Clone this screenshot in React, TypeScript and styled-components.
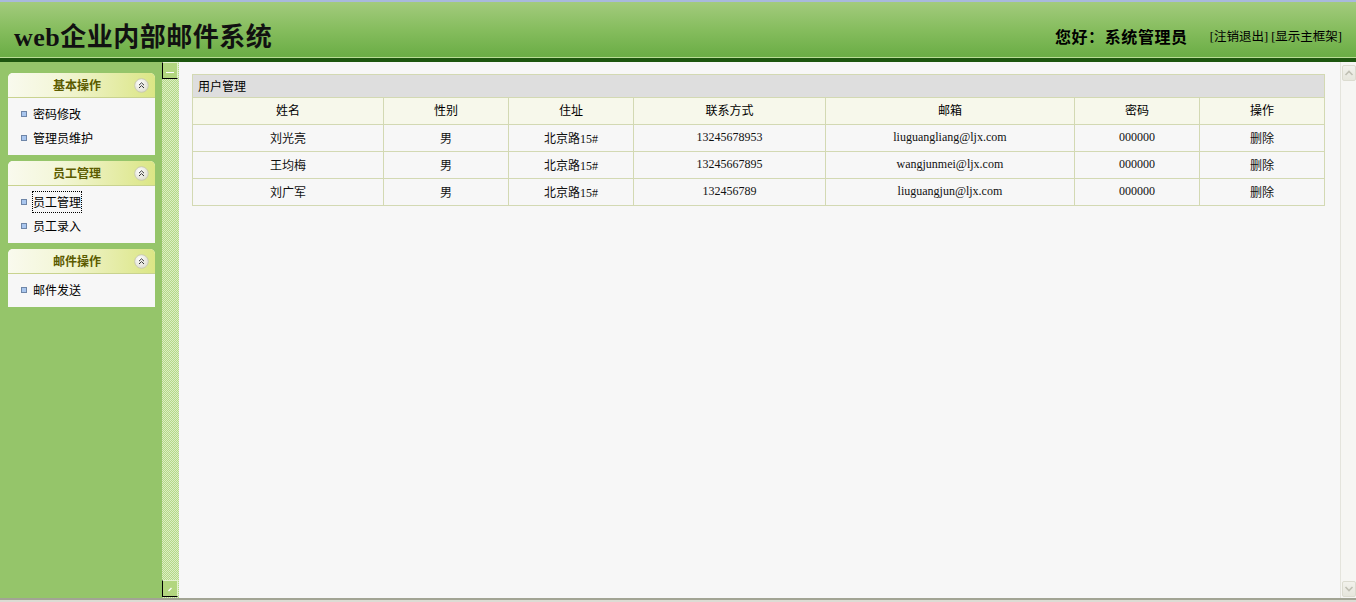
import React from 'react';
import styled, {createGlobalStyle} from 'styled-components';

const FONT = '"Liberation Serif", "Noto Sans CJK SC", serif';

const GlobalStyle = createGlobalStyle`
  html, body {
    margin: 0;
    padding: 0;
    background: #f7f7f7;
  }
  body {
    font-family: ${FONT};
    font-size: 12px;
    color: #000;
  }
`;

type MenuGroup = {title: string; items: string[]};

const menus: MenuGroup[] = [
  {title: '基本操作', items: ['密码修改', '管理员维护']},
  {title: '员工管理', items: ['员工管理', '员工录入']},
  {title: '邮件操作', items: ['邮件发送']},
];

const users = [
  {name: '刘光亮', sex: '男', addr: '北京路15#', phone: '13245678953', mail: 'liuguangliang@ljx.com', pwd: '000000'},
  {name: '王均梅', sex: '男', addr: '北京路15#', phone: '13245667895', mail: 'wangjunmei@ljx.com', pwd: '000000'},
  {name: '刘广军', sex: '男', addr: '北京路15#', phone: '132456789', mail: 'liuguangjun@ljx.com', pwd: '000000'},
];

const columns = [
  {label: '姓名', width: 191},
  {label: '性别', width: 125},
  {label: '住址', width: 125},
  {label: '联系方式', width: 192},
  {label: '邮箱', width: 249},
  {label: '密码', width: 125},
  {label: '操作', width: 125},
];

const CollapseIcon = () => (
  <svg width='15' height='15' viewBox='0 0 15 15'>
    <defs>
      <radialGradient id='cg' cx='0.4' cy='0.35' r='0.7'>
        <stop offset='0' stopColor='#ffffff' />
        <stop offset='1' stopColor='#dcdccc' />
      </radialGradient>
    </defs>
    <circle cx='7.5' cy='7.5' r='6.8' fill='url(#cg)' stroke='#c4c4b0' strokeWidth='0.8' />
    <path d='M5 7.2 L7.5 4.8 L10 7.2 M5 10 L7.5 7.6 L10 10' fill='none' stroke='#333' strokeWidth='1' />
  </svg>
);

export default function App() {
  return (
    <Page>
      <GlobalStyle />
      <Header>
        <Logo>web企业内部邮件系统</Logo>
        <UserArea>
          <Greeting>您好：系统管理员</Greeting>
          <HeaderLinks>[注销退出] [显示主框架]</HeaderLinks>
        </UserArea>
      </Header>
      <HeaderRule />
      <Body>
        <Sidebar>
          {menus.map((group) => (
            <MenuBox key={group.title}>
              <MenuHead>
                <MenuTitle>{group.title}</MenuTitle>
                <CollapseIcon />
              </MenuHead>
              <MenuList>
                {group.items.map((item, i) => (
                  <MenuItem key={item}>
                    <Bullet />
                    <MenuText $focused={group.title === '员工管理' && i === 0}>{item}</MenuText>
                  </MenuItem>
                ))}
              </MenuList>
            </MenuBox>
          ))}
        </Sidebar>
        <Splitter>
          <SplitButton>
            <svg width='14' height='14' viewBox='0 0 14 14'>
              <path d='M3 8.5 H11' stroke='#fff' strokeWidth='1' />
            </svg>
          </SplitButton>
          <SplitButton>
            <svg width='14' height='14' viewBox='0 0 14 14'>
              <path d='M5.5 9 L8.5 6' stroke='#fff' strokeWidth='1.2' />
            </svg>
          </SplitButton>
        </Splitter>
        <Main>
          <Table>
            <colgroup>
              {columns.map((c) => (
                <col key={c.label} style={{width: c.width}} />
              ))}
            </colgroup>
            <tbody>
              <tr>
                <TitleCell colSpan={7}>用户管理</TitleCell>
              </tr>
              <tr>
                {columns.map((c) => (
                  <HeadCell key={c.label}>{c.label}</HeadCell>
                ))}
              </tr>
              {users.map((u) => (
                <tr key={u.name}>
                  <Cell>{u.name}</Cell>
                  <Cell>{u.sex}</Cell>
                  <Cell>{u.addr}</Cell>
                  <Cell>{u.phone}</Cell>
                  <Cell>{u.mail}</Cell>
                  <Cell>{u.pwd}</Cell>
                  <Cell>删除</Cell>
                </tr>
              ))}
            </tbody>
          </Table>
        </Main>
        <ScrollBar>
          <ScrollButton>
            <svg width='10' height='8' viewBox='0 0 10 8'>
              <path d='M1.5 6 L5 2.5 L8.5 6' fill='none' stroke='#c0c0b4' strokeWidth='1.6' />
            </svg>
          </ScrollButton>
          <ScrollButton>
            <svg width='10' height='8' viewBox='0 0 10 8'>
              <path d='M1.5 2 L5 5.5 L8.5 2' fill='none' stroke='#c0c0b4' strokeWidth='1.6' />
            </svg>
          </ScrollButton>
        </ScrollBar>
      </Body>
      <Footer />
    </Page>
  );
}

const Page = styled.div`
  display: flex;
  flex-direction: column;
  height: 602px;
  overflow: hidden;
`;

const Header = styled.div`
  display: flex;
  align-items: center;
  justify-content: space-between;
  height: 55px;
  border-top: 2px solid #a9b9dd;
  background: linear-gradient(#a3cb7d, #86bd5e 50%, #6aad45);
  padding: 0 14px 0 14px;
`;

const Logo = styled.div`
  font-family: ${FONT};
  font-size: 26px;
  font-weight: bold;
  color: #111;
  margin-top: 9px;
  letter-spacing: 0.5px;
`;

const UserArea = styled.div`
  display: flex;
  align-items: center;
  margin-top: 12px;
`;

const Greeting = styled.span`
  font-size: 16px;
  font-weight: bold;
  letter-spacing: 0.6px;
  margin-right: 22px;
`;

const HeaderLinks = styled.span`
  font-size: 12.5px;
`;

const HeaderRule = styled.div`
  height: 4px;
  border-top: 1px solid #b9dc96;
  background: #1d560f;
`;

const Body = styled.div`
  display: flex;
  flex: 1;
  min-height: 0;
`;

const Sidebar = styled.div`
  width: 148px;
  background: #95c56a;
  padding: 11px 6px 0 8px;
  display: flex;
  flex-direction: column;
  gap: 6px;
`;

const MenuBox = styled.div`
  background: #f7f7f7;
  border-radius: 5px 5px 0 0;
  overflow: hidden;
`;

const MenuHead = styled.div`
  display: flex;
  align-items: center;
  height: 24px;
  padding: 0 6px 0 12px;
  background: linear-gradient(90deg, #f9faee 0%, #f3f6d8 35%, #e6edab 70%, #dbe685 100%);
  border-bottom: 1px solid #c9d38f;
`;

const MenuTitle = styled.span`
  flex: 1;
  text-align: center;
  font-weight: bold;
  font-size: 12px;
  color: #5b5b00;
`;

const MenuList = styled.div`
  padding: 4px 0 5px 0;
`;

const MenuItem = styled.div`
  display: flex;
  align-items: center;
  height: 24px;
  padding-left: 13px;
`;

const Bullet = styled.span`
  width: 4px;
  height: 4px;
  background: #a9c6ee;
  border: 1px solid #6f86a8;
  margin-right: 6px;
`;

const MenuText = styled.span<{$focused?: boolean}>`
  font-size: 12px;
  padding: 1px 0;
  outline: ${(p) => (p.$focused ? '1px dotted #000' : 'none')};
`;

const Splitter = styled.div`
  width: 18px;
  display: flex;
  flex-direction: column;
  justify-content: space-between;
  background: repeating-conic-gradient(#b3d886 0 25%, #dcefc4 0 50%) 0 0 / 2px 2px;
  border-left: 1px solid #95c56a;
  box-sizing: border-box;
`;

const SplitButton = styled.div`
  width: 16px;
  height: 17px;
  box-sizing: border-box;
  display: flex;
  align-items: center;
  justify-content: center;
  background: #b2d67f;
  border-top: 1px solid #e2f0cc;
  border-right: 1px solid #e2f0cc;
  border-left: 1px solid #000;
  border-bottom: 1px solid #000;
  margin-bottom: 1px;
`;

const Main = styled.div`
  flex: 1;
  background: #f7f7f7;
  padding: 12px 15px 0 13px;
`;

const Table = styled.table`
  width: 100%;
  table-layout: fixed;
  border-collapse: collapse;
  border: 1px solid #d3d9b3;
  font-family: ${FONT};
  font-size: 12px;
`;

const TitleCell = styled.td`
  height: 22px;
  padding: 0 0 0 5px;
  background: #dedede;
  border: 1px solid #d3d9b3;
  text-align: left;
`;

const HeadCell = styled.td`
  height: 24px;
  padding: 0 0 2px 0;
  background: #f7f8eb;
  border: 1px solid #d3d9b3;
  text-align: center;
`;

const Cell = styled.td`
  height: 25px;
  padding: 0 0 1px 0;
  background: #f7f7f7;
  border: 1px solid #d3d9b3;
  text-align: center;
  color: #111;
`;

const ScrollBar = styled.div`
  width: 16px;
  box-sizing: border-box;
  display: flex;
  flex-direction: column;
  justify-content: space-between;
  background: #f6f6f3;
  border-left: 1px solid #e4e4dc;
  padding: 3px 0 1px 1px;
`;

const ScrollButton = styled.div`
  width: 14px;
  height: 16px;
  box-sizing: border-box;
  display: flex;
  align-items: center;
  justify-content: center;
  background: linear-gradient(#f2f2ec, #e6e6dc);
  border: 1px solid #dcdcd0;
  border-radius: 2px;
`;

const Footer = styled.div`
  height: 4px;
  border-top: 2px solid #a2a494;
  background: #dcdcd4;
  box-sizing: border-box;
`;
